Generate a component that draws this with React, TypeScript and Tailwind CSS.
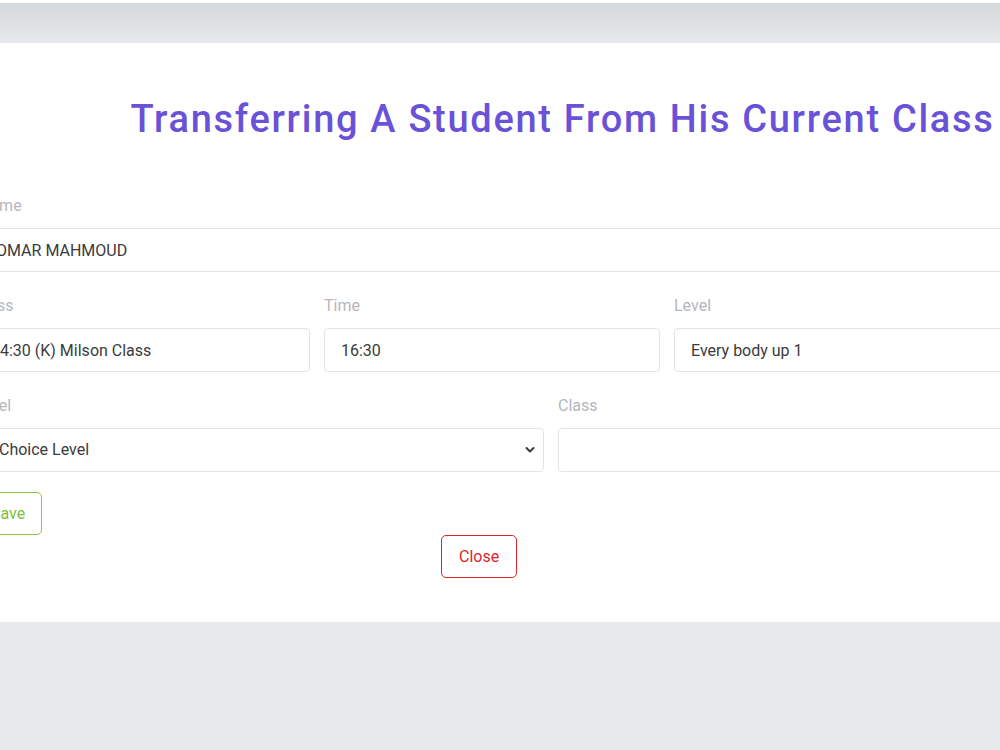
import React from 'react'

const labelCls = 'block h-[30px] leading-[30px] mb-[7px] text-[16px] text-[#b6b6be]'
const inputCls =
  'block w-full h-[44px] px-4 rounded-[4px] border border-[#e4e4e8] bg-white text-[16px] text-[#3b3b3b] outline-none'

function Field({ label, value, className = '' }: { label: string; value: string; className?: string }) {
  return (
    <div className={className}>
      <label className={labelCls}>{label}</label>
      <input className={inputCls} defaultValue={value} readOnly />
    </div>
  )
}

export default function App() {
  return (
    <div className="w-full h-[750px] overflow-hidden bg-[#e7e9ec] font-['Roboto','Liberation_Sans',sans-serif]">
      {/* top strip */}
      <div className="h-[3px] bg-white" />
      <div className="h-[40px] bg-gradient-to-b from-[#d5d9dc] to-[#e7e9ec]" />

      {/* modal body */}
      <div className="bg-white h-[579px] pt-[57px]">
        <div className="ml-[125px] w-[875px] h-[38px] flex justify-center">
          <h1 className="whitespace-nowrap text-[38px] leading-none font-medium tracking-[1.7px] text-[#6a52d8]">
            Transferring A Student From His Current Class
          </h1>
        </div>

        <form className="-ml-[26px] w-[1040px] mt-[53px]">
          {/* Name */}
          <Field label="Name" value="OMAR MAHMOUD" className="ml-[5px]" />

          {/* Current class details */}
          <div className="grid grid-cols-[336px_336px_336px] gap-x-[14px] mt-[19px]">
            <Field label="Class" value="14:30 (K) Milson Class" />
            <Field label="Time" value="16:30" />
            <Field label="Level" value="Every body up 1" />
          </div>

          {/* New level / class */}
          <div className="grid grid-cols-[570px_1fr] gap-x-[14px] mt-[19px]">
            <div>
              <label className={labelCls}>Level</label>
              <div className="relative">
                <select className="block w-full h-[44px] pl-[24px] pr-8 appearance-none rounded-[4px] border border-[#e4e4e8] bg-white text-[16px] text-[#3b3b3b] outline-none">
                  <option>Choice Level</option>
                </select>
                <svg
                  className="absolute right-[9px] top-[18px] pointer-events-none"
                  width="10"
                  height="8"
                  viewBox="0 0 10 8"
                  fill="none"
                >
                  <path d="M1.5 2l3.5 3.5L8.5 2" stroke="#343a40" strokeWidth="2" strokeLinecap="round" strokeLinejoin="round" />
                </svg>
              </div>
            </div>
            <Field label="Class" value="" />
          </div>

          {/* actions */}
          <div className="mt-[20px] flex">
            <button
              type="button"
              className="h-[43px] px-4 rounded-[5px] border border-[#8cc63f] bg-white text-[16px] text-[#7cbf3a]"
            >
              Save
            </button>
          </div>
          <div className="flex">
            <button
              type="button"
              className="h-[43px] px-[17px] ml-[467px] rounded-[5px] border border-[#d9252b] bg-white text-[16px] text-[#d9252b]"
            >
              Close
            </button>
          </div>
        </form>
      </div>
    </div>
  )
}
